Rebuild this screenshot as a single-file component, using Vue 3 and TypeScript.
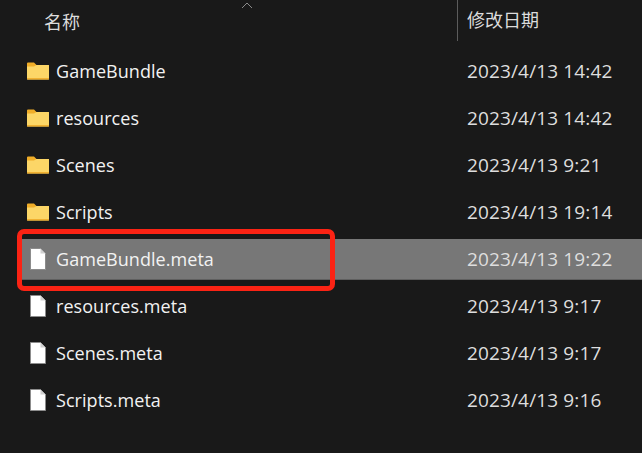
<template>
  <div class="explorer">
    <div class="header">
      <div class="col-name">名称</div>
      <svg class="sort-arrow" width="12" height="7" viewBox="0 0 12 7">
        <path d="M1 6 L6 1 L11 6" fill="none" stroke="#8a8a8a" stroke-width="1" />
      </svg>
      <div class="col-date">修改日期</div>
    </div>

    <div class="list">
      <div
        v-for="file in files"
        :key="file.name"
        :class="['row', { selected: file.selected }]"
      >
        <svg v-if="file.folder" class="icon" width="24" height="20" viewBox="0 0 24 20">
          <path d="M1 2.500 Q1 1.500 2 1.500 H8 L10.500 4 H23 V7 H1 Z" fill="#f0ad28" />
          <path d="M1 5.500 H8 L10.500 4 H22.500 Q23 4 23 5 V18 Q23 18.500 22 18.500 H2 Q1 18.500 1 18 Z" fill="#fcd667" />
          <path d="M1 17 H23 V18 Q23 18.500 22 18.500 H2 Q1 18.500 1 18 Z" fill="#f0b030" />
        </svg>
        <svg v-else class="icon" width="24" height="24" viewBox="0 0 24 24">
          <path d="M4.500 1.500 H14.500 L19.500 6.500 V22.500 H4.500 Z" fill="#ffffff" stroke="#8c8c8c" stroke-width="1" />
          <path d="M14.500 1.500 V6.500 H19.500 Z" fill="#d0d0d0" />
        </svg>
        <span class="name">{{ file.name }}</span>
        <span class="date">{{ file.date }}</span>
      </div>
      <div class="marker"></div>
    </div>
  </div>
</template>

<script setup lang="ts">
interface FileEntry {
  name: string
  date: string
  folder?: boolean
  selected?: boolean
}

const files: FileEntry[] = [
  { name: 'GameBundle', date: '2023/4/13 14:42', folder: true },
  { name: 'resources', date: '2023/4/13 14:42', folder: true },
  { name: 'Scenes', date: '2023/4/13 9:21', folder: true },
  { name: 'Scripts', date: '2023/4/13 19:14', folder: true },
  { name: 'GameBundle.meta', date: '2023/4/13 19:22', selected: true },
  { name: 'resources.meta', date: '2023/4/13 9:17' },
  { name: 'Scenes.meta', date: '2023/4/13 9:17' },
  { name: 'Scripts.meta', date: '2023/4/13 9:16' }
]
</script>

<style scoped>
.explorer {
  width: 642px;
  height: 453px;
  overflow: hidden;
  background: #191919;
  color: #f2f2f2;
  font-family: "Open Sans", "Noto Sans CJK SC", sans-serif;
  font-size: 18px;
}

.header {
  position: relative;
  display: flex;
  height: 41px;
  align-items: center;
  color: #dcdcdc;
}

.col-name {
  width: 457px;
  padding-left: 44px;
  box-sizing: border-box;
}

.col-date {
  flex: 1;
  padding-left: 9px;
  border-left: 1px solid #5c5c5c;
  line-height: 41px;
}

.sort-arrow {
  position: absolute;
  left: 241px;
  top: 2px;
}

.list {
  position: relative;
  display: flex;
  flex-direction: column;
  gap: 6px;
  padding-top: 10px;
}

.row {
  display: flex;
  align-items: center;
  height: 41px;
  margin-left: 20px;
  box-sizing: border-box;
  padding: 0 0 1px 6px;
}

.row.selected {
  background: #777777;
  padding-bottom: 0;
  border-bottom: 1px solid #5f5f5f;
}

.icon {
  flex-shrink: 0;
}

.name {
  width: 417px;
  padding: 0 0 1px 6px;
  box-sizing: border-box;
  letter-spacing: 0.05px;
}

.date {
  padding-bottom: 1px;
  font-size: 19px;
  letter-spacing: 0.14px;
  color: #dedede;
}

.marker {
  position: absolute;
  left: 17px;
  top: 188px;
  width: 318px;
  height: 62px;
  box-sizing: border-box;
  border: 5px solid #fb2314;
  border-radius: 7px;
}
</style>

<style>
html,
body {
  background: #191919;
}
</style>
